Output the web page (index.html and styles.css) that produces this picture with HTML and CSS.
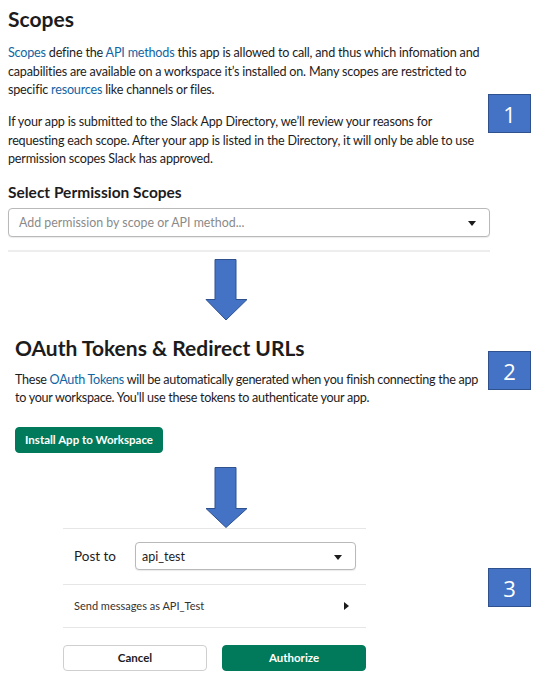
FILE: index.html
```html
<!DOCTYPE html>
<html lang="en">
<head>
<meta charset="utf-8">
<title>Slack app scopes</title>
<link rel="stylesheet" href="styles.css">
</head>
<body>
<main class="page">
  <section class="scopes">
    <h1 class="title">Scopes</h1>
    <p class="text first"><a class="link">Scopes</a> define the <a class="link">API methods</a> this app is allowed to call, and thus which infomation and capabilities are available on a workspace it’s installed on. Many scopes are restricted to specific <a class="link">resources</a> like channels or files.</p>
    <p class="text second">If your app is submitted to the Slack App Directory, we’ll review your reasons for requesting each scope. After your app is listed in the Directory, it will only be able to use permission scopes Slack has approved.</p>
    <h2 class="subtitle">Select Permission Scopes</h2>
    <div class="select wide">
      <span class="placeholder">Add permission by scope or API method...</span>
      <span class="caret"></span>
    </div>
    <div class="divider"></div>
  </section>

  <svg class="arrow arrow-one" width="43" height="62" viewBox="0 0 43 62" aria-hidden="true">
    <polygon points="10,0.5 31,0.5 31,40.5 42,40.5 21,61 1,40.5 10,40.5" fill="#4472c4" stroke="#2f528f" stroke-width="1"/>
  </svg>

  <section class="oauth">
    <h1 class="title">OAuth Tokens &amp; Redirect URLs</h1>
    <p class="text oauth-text">These <a class="link">OAuth Tokens</a> will be automatically generated when you finish connecting the app to your workspace. You'll use these tokens to authenticate your app.</p>
    <button class="btn primary install">Install App to Workspace</button>
  </section>

  <svg class="arrow arrow-two" width="43" height="61" viewBox="0 0 43 61" aria-hidden="true">
    <polygon points="10,0.5 31,0.5 31,41.5 42,41.5 21,60.5 1,41.5 10,41.5" fill="#4472c4" stroke="#2f528f" stroke-width="1"/>
  </svg>

  <section class="panel">
    <div class="row post-row">
      <span class="post-label">Post to</span>
      <div class="select narrow">
        <span class="value">api_test</span>
        <span class="caret"></span>
      </div>
    </div>
    <div class="row send-row">
      <span class="send-label">Send messages as API_Test</span>
      <span class="caret-right"></span>
    </div>
    <div class="actions">
      <button class="btn secondary">Cancel</button>
      <button class="btn primary">Authorize</button>
    </div>
  </section>

  <div class="badge badge-one">1</div>
  <div class="badge badge-two">2</div>
  <div class="badge badge-three">3</div>
</main>
</body>
</html>
```

FILE: styles.css
```css
html, body {
  margin: 0;
  padding: 0;
  background: #ffffff;
}

body {
  font-family: Lato, "Noto Sans", sans-serif;
  color: #1d1c1d;
  width: 548px;
  height: 687px;
  overflow: hidden;
}

.page {
  position: relative;
  display: flex;
  flex-direction: column;
  align-items: flex-start;
}

.scopes {
  width: 482px;
  margin-left: 8px;
  display: flex;
  flex-direction: column;
}

.title {
  margin: 0;
  font-size: 21px;
  line-height: 28px;
  font-weight: 700;
  color: #1d1c1d;
}

.scopes .title {
  margin-top: 5px;
}

.text {
  margin: 0;
  font-size: 12.6px;
  letter-spacing: -0.2px;
  line-height: 18.5px;
  color: #1d1c1d;
}

.link {
  color: #1264a3;
  text-decoration: none;
}

.scopes .text {
  padding-right: 4px;
}

.text.first {
  margin-top: 11px;
}

.text.second {
  margin-top: 13.5px;
}

.subtitle {
  margin: 13px 0 0;
  font-size: 15.5px;
  line-height: 20px;
  font-weight: 700;
}

.select {
  box-sizing: border-box;
  display: flex;
  align-items: center;
  justify-content: space-between;
  border: 1px solid #b9b9b9;
  border-radius: 4px;
  box-shadow: 0 1px 1px rgba(0, 0, 0, 0.08);
  background: #fff;
}

.select.wide {
  margin-top: 6px;
  height: 29px;
  padding: 0 13px 0 10px;
}

.placeholder {
  font-size: 12.4px;
  color: #8a8a8a;
}

.caret {
  width: 0;
  height: 0;
  border-left: 4.5px solid transparent;
  border-right: 4.5px solid transparent;
  border-top: 5px solid #1d1c1d;
  margin-top: 2px;
}

.divider {
  margin-top: 13px;
  height: 2px;
  background: #ededed;
}

.arrow {
  display: block;
  margin-left: 205px;
}

.arrow-one {
  margin-top: 7px;
}

.oauth {
  margin-left: 15px;
  width: 476px;
  margin-top: 13px;
  display: flex;
  flex-direction: column;
  align-items: flex-start;
}

.oauth-text {
  margin-top: 9px;
  letter-spacing: -0.29px;
}

.btn {
  box-sizing: border-box;
  height: 26px;
  border-radius: 4px;
  font-family: Lato, "Noto Sans", sans-serif;
  font-size: 11.5px;
  font-weight: 700;
  padding: 0;
  cursor: pointer;
}

.primary {
  background: #007a5a;
  border: 1px solid #007a5a;
  color: #ffffff;
}

.secondary {
  background: #ffffff;
  border: 1px solid #cfcfcf;
  color: #1d1c1d;
}

.install {
  margin-top: 19px;
  width: 148px;
}

.arrow-two {
  margin-top: 14px;
}

.panel {
  margin-left: 63px;
  width: 303px;
  display: flex;
  flex-direction: column;
}

.row {
  display: flex;
  align-items: center;
  border-top: 1px solid #e6e6e6;
}

.post-row {
  height: 55px;
  padding-left: 11px;
  gap: 19px;
}

.post-label {
  font-size: 13.5px;
}

.select.narrow {
  width: 221px;
  height: 28px;
  padding: 0 13px 0 6px;
}

.value {
  font-size: 12.5px;
  color: #1d1c1d;
}

.send-row {
  height: 42px;
  padding: 0 17px 0 11px;
  justify-content: space-between;
  border-bottom: 1px solid #e6e6e6;
}

.send-label {
  font-size: 11px;
  color: #333;
}

.caret-right {
  width: 0;
  height: 0;
  border-top: 4.5px solid transparent;
  border-bottom: 4.5px solid transparent;
  border-left: 5px solid #1d1c1d;
}

.actions {
  margin-top: 17px;
  display: flex;
  justify-content: space-between;
}

.actions .btn {
  width: 144px;
  height: 26px;
}

.badge {
  position: absolute;
  left: 488px;
  width: 43px;
  height: 39px;
  box-sizing: border-box;
  background: #4472c4;
  border: 1px solid #2f528f;
  color: #ffffff;
  font-family: "Open Sans", "Noto Sans", sans-serif;
  font-size: 22px;
  display: flex;
  align-items: center;
  justify-content: center;
}

.badge-one { top: 94px; }
.badge-two { top: 351px; }
.badge-three { top: 568px; }
```
